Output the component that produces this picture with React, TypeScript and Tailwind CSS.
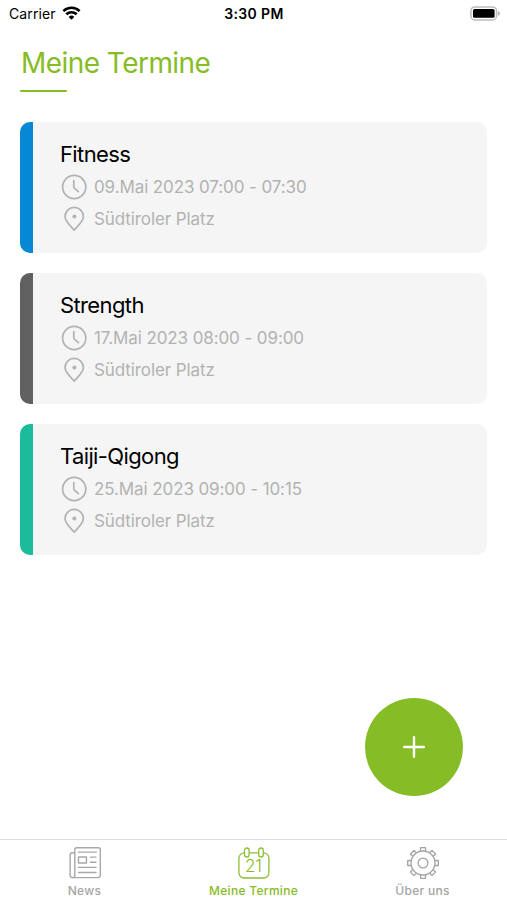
import type { ReactNode } from "react";

const appointments = [
  {
    title: "Fitness",
    time: "09.Mai 2023 07:00 - 07:30",
    place: "Südtiroler Platz",
    color: "bg-[#0788d5]",
  },
  {
    title: "Strength",
    time: "17.Mai 2023 08:00 - 09:00",
    place: "Südtiroler Platz",
    color: "bg-[#606060]",
  },
  {
    title: "Taiji-Qigong",
    time: "25.Mai 2023 09:00 - 10:15",
    place: "Südtiroler Platz",
    color: "bg-[#1abc9c]",
  },
];

const gearTeeth = [0, 45, 90, 135, 180, 225, 270, 315];

function WifiIcon() {
  return (
    <svg width="19" height="14" viewBox="0 0 18 14" fill="none" stroke="#000" strokeWidth="2.6">
      <path d="M0.9 5.1a11.6 11.6 0 0 1 16.2 0" />
      <path d="M3.8 8.3a7.5 7.5 0 0 1 10.4 0" />
      <path d="M9 13.8 6.2 10.9a4.1 4.1 0 0 1 5.6 0Z" fill="#000" stroke="none" />
    </svg>
  );
}

function BatteryIcon() {
  return (
    <svg width="31" height="15" viewBox="0 0 31 15">
      <rect x="0.9" y="0.9" width="25.6" height="13" rx="4" fill="#fff" stroke="#bdbdbd" strokeWidth="1.5" />
      <rect x="3" y="3" width="21.6" height="8.8" rx="1.6" fill="#000" />
      <path d="M27.8 5c2.9 0.8 2.9 4 0 4.8Z" fill="#b4b4b4" />
    </svg>
  );
}

function ClockIcon() {
  return (
    <svg width="28" height="28" viewBox="0 0 28 28" fill="none" stroke="#b2b2b2" strokeWidth="1.7" strokeLinecap="round" strokeLinejoin="round">
      <circle cx="14.2" cy="14" r="11.6" />
      <path d="M13.8 7.6v6.2q0 .8.6 1.3l4 3.6" />
    </svg>
  );
}

function PinIcon() {
  return (
    <svg width="28" height="28" viewBox="0 0 28 28" fill="none" stroke="#b2b2b2" strokeWidth="1.7" strokeLinejoin="round">
      <path d="M14.2 25.2C11.6 22.2 5 16.4 5 11.6a9.2 9.2 0 0 1 18.4 0C23.4 16.4 16.8 22.2 14.2 25.2Z" />
      <circle cx="14.4" cy="11.4" r="2" fill="#b2b2b2" stroke="none" />
    </svg>
  );
}

function NewsIcon() {
  return (
    <svg width="34" height="34" viewBox="0 0 34 34" fill="none" stroke="#a8a8a8" strokeWidth="1.4" strokeLinejoin="round" strokeLinecap="round">
      <path d="M6.8 29V3.5a1.8 1.8 0 0 1 1.8-1.8h21.9a1.8 1.8 0 0 1 1.8 1.8V29a2.6 2.6 0 0 1-2.6 2.6H4.7A2.6 2.6 0 0 1 2.1 29V9.2a2.4 2.4 0 0 1 2.4-2.4h2.3" />
      <path d="M6.8 29a2.3 2.3 0 0 1-2.2 2.6" />
      <path d="M10.3 6.1h18M22.3 11.1H28M22.3 16.2H28M10.5 21.4H28M10.5 26.5H28" />
      <rect x="10.5" y="11" width="8" height="6" />
    </svg>
  );
}

function CalendarIcon() {
  return (
    <span className="relative flex h-[34px] w-[34px] items-center justify-center">
      <svg className="absolute inset-0" width="34" height="34" viewBox="0 0 34 34" fill="none" stroke="#8bc034" strokeWidth="1.3">
        <path d="M7.4 6.8a5.5 5.5 0 0 0-5.5 5.5v14.5a5.2 5.2 0 0 0 5.2 5.2h19.6a5.2 5.2 0 0 0 5.2-5.2V12.3a5.5 5.5 0 0 0-5.5-5.5M12.2 6.8h9.4" />
        <rect x="7.5" y="2" width="4.6" height="9" rx="2.3" />
        <rect x="21.7" y="2" width="4.6" height="9" rx="2.3" />
      </svg>
      <span className="mt-[7px] text-[17px] leading-none font-light text-[#86bc25]">21</span>
    </span>
  );
}

function GearIcon() {
  return (
    <svg width="34" height="34" viewBox="0 0 34 34" fill="none" stroke="#a4a4a4" strokeWidth="1.3" strokeLinejoin="round">
      <circle cx="17" cy="17" r="4.9" />
      <circle cx="17" cy="17" r="12" />
      {gearTeeth.map((angle) => (
        <path key={angle} d="M14.5 5.3V1.7h5v3.6" transform={`rotate(${angle} 17 17)`} />
      ))}
    </svg>
  );
}

function Tab({ icon, label, active }: { icon: ReactNode; label: string; active?: boolean }) {
  return (
    <div className={`flex flex-1 flex-col items-center pt-[6px] ${active ? "text-[#86bc25]" : "text-[#a5a5a5]"}`}>
      {icon}
      <p className="mt-[2px] text-[12px] leading-[18px] font-medium tracking-[0.3px] whitespace-nowrap">{label}</p>
    </div>
  );
}

export default function App() {
  return (
    <div className="relative flex h-[900px] w-[507px] flex-col overflow-hidden bg-white font-['Inter',sans-serif]">
      <div className="grid h-[26px] grid-cols-3 items-center pr-[6px] pl-[9px] text-[14px]">
        <div className="flex items-center gap-[6px]">
          <span className="tracking-[0.1px]">Carrier</span>
          <WifiIcon />
        </div>
        <span className="-ml-[2px] text-center font-semibold tracking-[0.35px]">3:30 PM</span>
        <span className="flex justify-end">
          <BatteryIcon />
        </span>
      </div>

      <div className="flex flex-1 flex-col px-5">
        <h1 className="mt-[17px] pl-px text-[28px] leading-10 tracking-[-0.55px] text-[#86bc25]">Meine Termine</h1>
        <div className="mt-[6.5px] h-[2.5px] w-[47px] rounded-full bg-[#86bc25]" />

        <div className="mt-[30px] flex flex-col gap-5">
          {appointments.map((item) => (
            <div key={item.title} className="flex h-[131px] overflow-hidden rounded-[10px] bg-[#f5f5f5]">
              <div className={`w-[13px] ${item.color}`} />
              <div className="pt-4 pl-[27px]">
                <h2 className="text-[22px] leading-8 tracking-[-0.62px] text-black">{item.title}</h2>
                <div className="mt-px flex h-8 items-center gap-[6px] text-[17px] tracking-[-0.1px] text-[#b2b2b2]">
                  <ClockIcon />
                  <span className="pt-[2px]">{item.time}</span>
                </div>
                <div className="flex h-[31px] items-center gap-[6px] text-[17px] tracking-[-0.1px] text-[#b2b2b2]">
                  <PinIcon />
                  <span className="pt-[2px]">{item.place}</span>
                </div>
              </div>
            </div>
          ))}
        </div>
      </div>

      <button className="absolute right-[44px] bottom-[104px] flex h-[98px] w-[98px] items-center justify-center rounded-full bg-[#86bc25]">
        <svg width="22" height="22" viewBox="0 0 22 22" stroke="#fff" strokeWidth="2.4" strokeLinecap="round">
          <path d="M11 1.2v19.6M1.2 11h19.6" />
        </svg>
      </button>

      <div className="flex h-[61px] border-t border-[#dcdcdc]">
        <Tab icon={<NewsIcon />} label="News" />
        <Tab icon={<CalendarIcon />} label="Meine Termine" active />
        <Tab icon={<GearIcon />} label="Über uns" />
      </div>
    </div>
  );
}
